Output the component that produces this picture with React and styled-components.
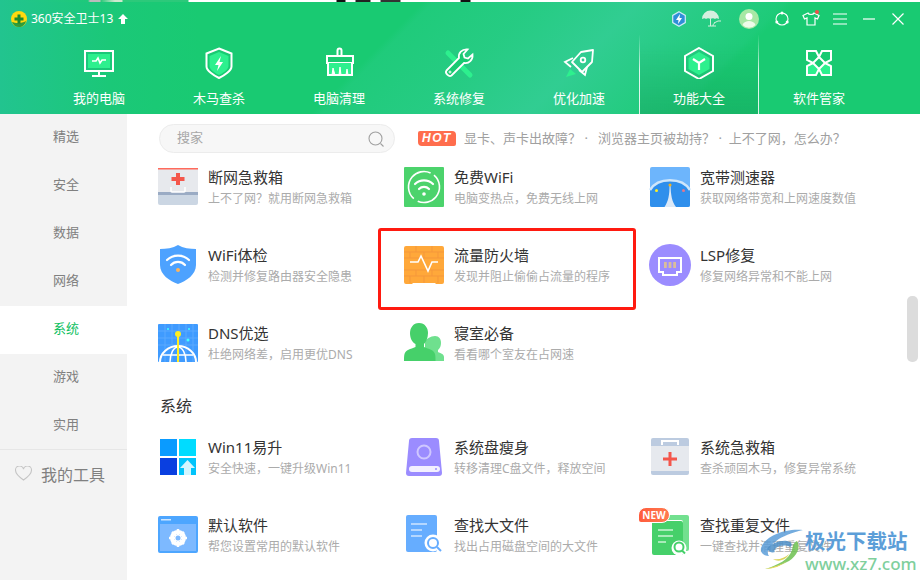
import React from 'react';
import styled, { createGlobalStyle } from 'styled-components';

const GlobalStyle = createGlobalStyle`
  html, body {
    margin: 0;
    padding: 0;
    background: #fff;
  }
  * {
    box-sizing: border-box;
  }
`;

const Page = styled.div`
  position: relative;
  width: 920px;
  height: 580px;
  overflow: hidden;
  background: #fff;
  font-family: 'Noto Sans', 'Noto Sans CJK SC', sans-serif;
`;

const TopStrip = styled.div`
  height: 2px;
  background: linear-gradient(
    90deg,
    #22c48f 0,
    #1ec97a 88px,
    #bbb 90px,
    #bbb 100px,
    #2cc97a 101px,
    #cfe8cf 115px,
    #cfe8cf 122px,
    #2cc97a 123px,
    #2cc97a 188px,
    #fff 189px,
    #fff 336px,
    #111 337px,
    #111 345px,
    #fff 346px,
    #fff 355px,
    #222 356px,
    #222 370px,
    #fff 371px,
    #fff 380px,
    #333 381px,
    #333 400px,
    #fff 401px,
    #fff 460px,
    #111 461px,
    #111 470px,
    #fff 471px
  );
`;

const Header = styled.header`
  height: 112px;
  display: flex;
  flex-direction: column;
  color: #fff;
  background:
    linear-gradient(
      135deg,
      rgba(90, 210, 200, 0) 41%,
      rgba(90, 210, 200, 0.1) 42%,
      rgba(90, 210, 200, 0.2) 52%,
      rgba(90, 210, 200, 0.37) 62%,
      rgba(90, 210, 200, 0.2) 70%,
      rgba(90, 210, 200, 0.08) 76%,
      rgba(90, 210, 200, 0) 77%
    ),
    linear-gradient(90deg, #22c48f 0, #1bc878 110px, #19ca72 200px);
`;

const TitleBar = styled.div`
  height: 33px;
  display: flex;
  align-items: center;
  justify-content: space-between;
  padding: 0 8px 0 11px;
`;

const Brand = styled.div`
  display: flex;
  align-items: center;
  font-size: 12px;
  line-height: 18px;
`;

const BrandName = styled.span`
  margin: 0 5px 0 4px;
`;

const WindowTools = styled.div`
  display: flex;
  align-items: center;
`;

const ToolSlot = styled.div`
  width: ${(p) => p.$w}px;
  height: 24px;
  display: flex;
  align-items: center;
  justify-content: center;
`;

const Nav = styled.nav`
  flex: 1;
  display: flex;
  padding-left: 39px;
`;

const Tab = styled.div`
  width: 120px;
  display: flex;
  flex-direction: column;
  align-items: center;
  padding-top: 12px;
  border-left: 1px solid transparent;
  border-right: 1px solid transparent;
  ${(p) =>
    p.$active &&
    `
    background: linear-gradient(180deg, rgba(20, 150, 85, 0) 10%, rgba(20, 150, 85, 0.38) 100%);
    border-image: linear-gradient(180deg, rgba(255,255,255,0), rgba(255,255,255,.85) 45%) 1;
  `}
`;

const TabLabel = styled.span`
  margin-top: 9px;
  font-size: 13px;
  line-height: 20px;
  white-space: nowrap;
`;

const Body = styled.div`
  height: 466px;
  display: flex;
`;

const Sidebar = styled.aside`
  width: 127px;
  flex: none;
  background: #f3f3f3;
  display: flex;
  flex-direction: column;
`;

const SideItem = styled.div`
  height: 48px;
  display: flex;
  align-items: center;
  justify-content: center;
  padding: 0 0 6px 5px;
  font-size: 13px;
  color: ${(p) => (p.$active ? '#0cc05e' : '#808080')};
  background: ${(p) => (p.$active ? '#fff' : 'transparent')};
`;

const MyTools = styled.div`
  height: 50px;
  margin-top: -1px;
  border-top: 1px solid #e6e6e6;
  display: flex;
  align-items: center;
  padding: 0 0 2px 15px;
  gap: 9px;
  font-size: 16px;
  color: #808080;
`;

const Main = styled.main`
  flex: 1;
  min-width: 0;
  padding: 10px 0 0 31px;
`;

const SearchRow = styled.div`
  height: 29px;
  margin-bottom: 14px;
  display: flex;
  align-items: center;
`;

const SearchBox = styled.div`
  width: 236px;
  height: 29px;
  margin-left: 1px;
  padding: 0 10px 0 17px;
  border: 1px solid #ececec;
  border-radius: 15px;
  background: #f7f7f7;
  display: flex;
  align-items: center;
  justify-content: space-between;
  font-size: 13px;
  line-height: 24px;
  color: #a8a8a8;
`;

const PlaceholderText = styled.span`
  margin-top: -3px;
`;

const HotBadge = styled.span`
  width: 38px;
  height: 15px;
  margin: 0 8px 0 23px;
  border-radius: 2px 4px 2px 4px;
  background: #ff6d4d;
  color: #fff;
  font: italic 700 12px/15px 'Liberation Sans', sans-serif;
  letter-spacing: 1.5px;
  text-align: center;
`;

const HotLinks = styled.span`
  margin-top: -2px;
  font-size: 13px;
  line-height: 18px;
  color: #a0a0a0;
  white-space: pre;
`;

const ItemGrid = styled.div`
  display: grid;
  grid-template-columns: repeat(3, 246px);
  grid-auto-rows: 58px;
  row-gap: 20px;
`;

const SectionTitle = styled.h2`
  margin: 14px 0 20px 2px;
  font-size: 16px;
  font-weight: 400;
  line-height: 22px;
  color: #333;
`;

const Item = styled.div`
  position: relative;
  display: flex;
  gap: 10px;
`;

const ItemIcon = styled.svg`
  flex: none;
  width: 40px;
  height: 40px;
  overflow: visible;
`;

const ItemText = styled.div`
  white-space: nowrap;
`;

const ItemTitle = styled.div`
  font-size: 15px;
  line-height: 21px;
  color: #333;
`;

const ItemDesc = styled.div`
  margin-top: 1px;
  font-size: 12px;
  line-height: 20px;
  color: #ababab;
`;

const Highlight = styled.div`
  position: absolute;
  left: -26px;
  top: -17px;
  width: 258px;
  height: 82px;
  border: 3px solid #ff1a10;
  border-radius: 3px;
  pointer-events: none;
`;

const NewBadge = styled.span`
  position: absolute;
  left: -12px;
  top: -8px;
  width: 32px;
  height: 16px;
  border: 1px solid #fff;
  border-radius: 8px 8px 8px 3px;
  background: linear-gradient(90deg, #ff5c3c, #ff7a50);
  color: #fff;
  font: 700 10px/14px 'Noto Sans', sans-serif;
  text-align: center;
`;

const ScrollThumb = styled.div`
  position: absolute;
  left: 907px;
  top: 296px;
  width: 11px;
  height: 66px;
  border-radius: 5px;
  background: #dcdcdc;
`;

const Watermark = styled.div`
  position: absolute;
  left: 759px;
  top: 528px;
  display: flex;
  pointer-events: none;
`;

const WatermarkText = styled.div`
  display: flex;
  flex-direction: column;
`;

const WatermarkName = styled.span`
  font-size: 20.5px;
  font-weight: 700;
  line-height: 27px;
  color: #5c9ed8;
  white-space: nowrap;
`;

const WatermarkUrl = styled.span`
  font-size: 17px;
  font-weight: 500;
  line-height: 18px;
  color: #7fcf9d;
`;

const Spark = '#2df08e';

const TabSvg = ({ children }) => (
  <svg width="32" height="32" viewBox="0 0 32 32" fill="none" stroke="#fff" strokeWidth="2">
    {children}
  </svg>
);

const MonitorIcon = () => (
  <TabSvg>
    <rect x="2" y="4" width="28" height="20" />
    <rect x="5" y="7" width="22" height="14" fill={Spark} stroke="none" />
    <path d="M9 14h4l2-3 2 5 2-3h4" strokeWidth="1.6" />
    <path d="M16 25v4M9 29h14" />
  </TabSvg>
);

const ShieldIcon = () => (
  <TabSvg>
    <path d="M16 1.5 28.5 6.5v13c0 4-7 9-12.5 11.5C10.500 28.500 3.500 23.500 3.500 19.500v-13Z" />
    <path d="M16 5 25.500 9v10c0 3-5 7-9.500 9-4.500-2-9.500-6-9.500-9V9Z" fill={Spark} stroke="none" />
    <path d="M18 9l-6 9h3.500l-1.500 6 6-9h-3.500Z" fill="#fff" stroke="none" />
  </TabSvg>
);

const BroomIcon = () => (
  <TabSvg>
    <path d="M14.500 9V3.500a2 2 0 0 1 4 0V9" />
    <rect x="4" y="9" width="26" height="7" />
    <path d="M5 16h24l1 13H4Z" fill={Spark} stroke="none" />
    <path d="M5 16v12h24V16" />
    <path d="M9 28l1-7 2 7M16 28l1-8 1 8M23 28l1-6 1 6" fill="#fff" stroke="#fff" strokeWidth="1" />
  </TabSvg>
);

const WrenchIcon = () => (
  <TabSvg>
    <path d="M5 6 27 28" stroke={Spark} strokeWidth="5" strokeLinecap="round" />
    <path
      d="M3.500 23.500 16 11C15 6 19 2 24.500 2.500L20.500 7l1 3.500 3.500 1 4.500-4C30 13 26 17 21 16L8.500 28.500C6 30.500 1.500 26 3.500 23.500Z"
      fill="#19ca72"
      strokeWidth="1.800"
    />
    <circle cx="7" cy="25" r="1" strokeWidth="1" />
  </TabSvg>
);

const RocketIcon = () => (
  <TabSvg>
    <path d="M3 30l4-8 6 5Z" fill={Spark} stroke="none" />
    <path d="M30 3 29 15 19 25 9 15 18 5Z" strokeLinejoin="round" strokeWidth="1.800" />
    <path d="M10 11 2 15l6 5M24 20l-2 8-6-5" strokeWidth="1.800" />
    <circle cx="20" cy="13" r="2.300" strokeWidth="1.800" />
  </TabSvg>
);

const HexIcon = () => (
  <TabSvg>
    <path d="M16 1 30 9v15l-14 8-14-8V9Z" />
    <path d="M16 5 26.500 11v11L16 28 5.500 22V11Z" fill={Spark} stroke="none" />
    <path d="M10 12l6 4 6-4M16 16v7" strokeWidth="2.200" />
  </TabSvg>
);

const PetalIcon = () => (
  <TabSvg>
    <path d="M4 28h9l3-6-6-6-6 3Z" fill={Spark} />
    <path d="M28 28h-9l-3-6 6-6 6 3Z" fill={Spark} />
    <path d="M4 4h9l3 6-6 6-6-3Z" />
    <path d="M28 4h-9l-3 6 6 6 6-3Z" />
  </TabSvg>
);

const tabs = [
  { label: '我的电脑', Icon: MonitorIcon },
  { label: '木马查杀', Icon: ShieldIcon },
  { label: '电脑清理', Icon: BroomIcon },
  { label: '系统修复', Icon: WrenchIcon },
  { label: '优化加速', Icon: RocketIcon },
  { label: '功能大全', Icon: HexIcon, active: true },
  { label: '软件管家', Icon: PetalIcon },
];

const sideItems = ['精选', '安全', '数据', '网络', '系统', '游戏', '实用'];

const icons = {
  firstAid: (
    <>
      <rect y="1" width="40" height="37" rx="2" fill="#cbd6e3" />
      <path d="M0 3a2 2 0 0 1 2-2h36a2 2 0 0 1 2 2v22H0Z" fill="#e7e9ed" />
      <rect y="1" width="40" height="1.500" fill="#ff6a5c" />
      <rect y="25" width="40" height="3" fill="#9aabc4" />
      <path d="M13 20v4a1 1 0 0 0 1 1h12a1 1 0 0 0 1-1v-4" fill="none" stroke="#fff" strokeWidth="1.500" />
      <path d="M18 6h4v4h4.500v4H22v4h-4v-4h-4.500v-4H18Z" fill="#f4574c" />
    </>
  ),
  wifiSquare: (
    <>
      <rect width="40" height="40" fill="#4cd36c" rx="1" />
      <circle cx="20" cy="20" r="15.500" fill="none" stroke="#fff" strokeWidth="1.600" strokeDasharray="44 4.700" transform="rotate(-50 20 20)" />
      <g fill="none" stroke="#fff" strokeWidth="2.200" strokeLinecap="round">
        <path d="M11 17a13 13 0 0 1 18 0" />
        <path d="M15 22a7 7 0 0 1 10 0" />
      </g>
      <circle cx="20" cy="27" r="1.800" fill="#fff" />
    </>
  ),
  speed: (
    <>
      <rect width="40" height="40" rx="2" fill="#6db5fc" />
      <path d="M0 23C8 10 32 10 40 23V38a2 2 0 0 1-2 2H2a2 2 0 0 1-2-2Z" fill="#2f8fec" />
      <path d="M0 23C8 10 32 10 40 23" fill="none" stroke="#cfe6fb" strokeWidth="2.500" />
      <path d="M19.500 18h1c.3 10 1.500 17 5.500 22H14.500c3.500-5 5.200-12 5-22Z" fill="#dce9f7" />
      <circle cx="20" cy="18" r="1.500" fill="#f5b21c" />
      <circle cx="6.500" cy="23.500" r="1.500" fill="#ffee22" />
      <circle cx="33.500" cy="23.500" r="1.500" fill="#e6758b" />
    </>
  ),
  shield: (
    <>
      <path d="M20 0 C25 3 32 4 38 4V20C38 30 28 36 20 39 12 36 2 30 2 20V4C8 4 15 3 20 0Z" fill="#4da2ff" />
      <g fill="none" stroke="#fff" strokeWidth="2.200" strokeLinecap="round">
        <path d="M9 15a16 16 0 0 1 22 0" />
        <path d="M13 20a9.500 9.500 0 0 1 14 0" />
      </g>
      <circle cx="20" cy="25" r="2" fill="#ffb45a" />
    </>
  ),
  firewall: (
    <>
      <path d="M0 3a2 2 0 0 1 2-2h36a2 2 0 0 1 2 2v34a2 2 0 0 1-2 2h-6l-1-1H9l-1 1H2a2 2 0 0 1-2-2Z" fill="#ffa83a" />
      <path d="M0 7h40M0 13h40M0 25h40M0 31h40M12 1v6M28 1v6M6 7v6M20 7v6M34 7v6M12 25v6M28 25v6M6 31v7M20 31v7M34 31v7" stroke="#f5973a" strokeWidth="1" />
      <path d="M6 17h8l3-6 7 15 4-9h6" fill="none" stroke="#fff" strokeWidth="1.600" />
    </>
  ),
  port: (
    <>
      <circle cx="20" cy="20" r="21" fill="#9b8cff" />
      <path d="M9 13h22v14h-4v3H13v-3H9Z" fill="none" stroke="#fff" strokeWidth="2" />
      <rect x="14" y="17" width="2.800" height="6" fill="#d9bd9b" />
      <rect x="18.600" y="17" width="2.800" height="6" fill="#d9bd9b" />
      <rect x="23.200" y="17" width="2.800" height="6" fill="#d9bd9b" />
    </>
  ),
  dns: (
    <>
      <rect y="1" width="40" height="38" fill="#3f9bff" rx="1" />
      <path d="M7 1v38M14 1v38M21 1v38M28 1v38M35 1v38M0 8h40M0 15h40M0 22h40" stroke="#5aa9ff" strokeWidth="1" />
      <circle cx="10" cy="6" r="1" fill="#4ff" />
      <circle cx="31" cy="6" r="1" fill="#4ff" />
      <circle cx="30" cy="17" r="1.500" fill="#4ff" />
      <path d="M2 39a18 16 0 0 1 36 0" fill="none" stroke="#fff" strokeWidth="2" />
      <path d="M12 39a8 15 0 0 1 16 0M5 32h30" fill="none" stroke="#fff" strokeWidth="1.500" />
      <path d="M20 10v29" stroke="#ffee22" strokeWidth="2" />
      <circle cx="20" cy="11" r="3" fill="#ffee22" />
    </>
  ),
  people: (
    <>
      <path d="M31 13c4 0 6 3 6 7 0 3-1 5-3 7v2c2 1 6 2 6 5v4H21V20c0-4 6-7 10-7Z" fill="#6fe08e" />
      <path d="M15 0c6 0 9 5 9 10 0 5-2 9-4 11v3c5 2 10 3 11 7 .5 2 .5 4 .5 7H0c0-3 0-5 .5-7 1-4 6-5 11-7v-3C8 19 6 15 6 10 6 5 9 0 15 0Z" fill="#46d06a" />
    </>
  ),
  win: (
    <>
      <rect x="2" y="2" width="17" height="17" fill="#0a9bff" />
      <rect x="21" y="2" width="17" height="17" fill="#00dcff" />
      <rect x="2" y="21" width="17" height="17" fill="#0a3fe0" />
      <rect x="21" y="21" width="17" height="17" fill="#00c4fb" />
      <path d="M29.500 23 37 31h-4v7h-7v-7h-4Z" fill="#d2f6ff" />
    </>
  ),
  disk: (
    <>
      <path d="M2 36 5 4a3 3 0 0 1 3-3h24a3 3 0 0 1 3 3l3 32a3 3 0 0 1-3 3H5a3 3 0 0 1-3-3Z" fill="#9b8cff" />
      <circle cx="20" cy="15" r="6.500" fill="none" stroke="#cfc7ff" strokeWidth="2" />
      <rect x="5" y="29" width="31" height="6" rx="3" fill="#f3f0ff" />
      <circle cx="32" cy="32" r="1" fill="#9b8cff" />
    </>
  ),
  kit: (
    <>
      <rect x="1" y="1" width="38" height="37" rx="2" fill="#bccbe0" />
      <rect x="1" y="9" width="38" height="25" fill="#e6e9ee" />
      <path d="M12 8V4h16v4" fill="none" stroke="#fff" strokeWidth="2" />
      <path d="M18.500 15h3v5.500H27v3h-5.500V29h-3v-5.500H13v-3h5.500Z" fill="#f4574c" />
    </>
  ),
  gear: (
    <>
      <rect y="1" width="40" height="37" rx="2" fill="#4da6ff" />
      <rect x="2" y="9" width="36" height="27" fill="#7db9ff" />
      <rect x="3" y="4" width="10" height="1.500" fill="#cfe6ff" />
      <circle cx="20" cy="23" r="6" fill="none" stroke="#fff" strokeWidth="4" />
      <path d="M20 14v18M11 23h18M14 17l12 12M26 17 14 29" stroke="#fff" strokeWidth="2.500" />
      <circle cx="20" cy="23" r="2.500" fill="#7db9ff" />
    </>
  ),
  bigFile: (
    <>
      <rect x="2" width="31" height="37" rx="2" fill="#66adff" />
      <path d="M7 9h16M7 15h11M7 21h11" stroke="#cfe5ff" strokeWidth="1.600" />
      <circle cx="29" cy="28" r="8.500" fill="#fff" />
      <circle cx="29" cy="28" r="5" fill="none" stroke="#66adff" strokeWidth="2" />
      <path d="M33 32l4 4" stroke="#66adff" strokeWidth="2" />
    </>
  ),
  dupFile: (
    <>
      <rect x="8" y="0" width="31" height="36" rx="2" fill="#72e08f" />
      <rect x="3" y="5" width="30" height="35" rx="2" fill="#fff" />
      <rect x="2" y="6" width="31" height="34" rx="2" fill="#46d06a" />
      <path d="M8 15h15M8 21h15M8 27h8" stroke="#c9f3d4" strokeWidth="1.600" />
      <circle cx="29" cy="33" r="7.500" fill="#fff" />
      <circle cx="29" cy="32" r="4.500" fill="none" stroke="#46d06a" strokeWidth="2" />
      <path d="M32 35.500l3 3" stroke="#46d06a" strokeWidth="2" />
    </>
  ),
};

const firstGroup = [
  { icon: 'firstAid', title: '断网急救箱', desc: '上不了网？就用断网急救箱' },
  { icon: 'wifiSquare', title: '免费WiFi', desc: '电脑变热点，免费无线上网' },
  { icon: 'speed', title: '宽带测速器', desc: '获取网络带宽和上网速度数值' },
  { icon: 'shield', title: 'WiFi体检', desc: '检测并修复路由器安全隐患' },
  { icon: 'firewall', title: '流量防火墙', desc: '发现并阻止偷偷占流量的程序', marked: true },
  { icon: 'port', title: 'LSP修复', desc: '修复网络异常和不能上网' },
  { icon: 'dns', title: 'DNS优选', desc: '杜绝网络差，启用更优DNS' },
  { icon: 'people', title: '寝室必备', desc: '看看哪个室友在占网速' },
];

const secondGroup = [
  { icon: 'win', title: 'Win11易升', desc: '安全快速，一键升级Win11' },
  { icon: 'disk', title: '系统盘瘦身', desc: '转移清理C盘文件，释放空间' },
  { icon: 'kit', title: '系统急救箱', desc: '查杀顽固木马，修复异常系统' },
  { icon: 'gear', title: '默认软件', desc: '帮您设置常用的默认软件' },
  { icon: 'bigFile', title: '查找大文件', desc: '找出占用磁盘空间的大文件' },
  { icon: 'dupFile', title: '查找重复文件', desc: '一键查找并清理重复文件', isNew: true },
];

const ToolItem = ({ item }) => (
  <Item>
    <ItemIcon viewBox="0 0 40 40">{icons[item.icon]}</ItemIcon>
    <ItemText>
      <ItemTitle>{item.title}</ItemTitle>
      <ItemDesc>{item.desc}</ItemDesc>
    </ItemText>
    {item.isNew && <NewBadge>NEW</NewBadge>}
    {item.marked && <Highlight />}
  </Item>
);

const App = () => {
  return (
    <Page>
      <GlobalStyle />
      <TopStrip />
      <Header>
        <TitleBar>
          <Brand>
            <svg width="16" height="16" viewBox="0 0 16 16">
              <circle cx="8" cy="8" r="8" fill="#ffd90f" />
              <path d="M1 11c3 1 9 2 14-1-1 4-4 6-7 6-3 0-6-2-7-5Z" fill="#2f9d3a" />
              <path d="M6.500 3.500h3v3h3v3h-3v3h-3v-3h-3v-3h3Z" fill="#1c8a2d" />
            </svg>
            <BrandName>360安全卫士13</BrandName>
            <svg width="10" height="10" viewBox="0 0 10 10">
              <path d="M5 0 10 5H7v5H3V5H0Z" fill="#fff" />
            </svg>
          </Brand>
          <WindowTools>
            <ToolSlot $w={30}>
              <svg width="16" height="16" viewBox="0 0 16 16">
                <path d="M8 .8 14.300 4.400v7.200L8 15.200 1.700 11.600V4.400Z" fill="#2f8fd8" stroke="#cfeaf8" strokeWidth="1.200" />
                <path d="M9 3 5 9h2.500L7 13l4-6H8.500Z" fill="#fff" />
              </svg>
            </ToolSlot>
            <ToolSlot $w={36}>
              <svg width="20" height="18" viewBox="0 0 20 18" fill="none">
                <path d="M0 9a8.500 8.500 0 0 1 17 0c-2-1-3-1-4 0-1-1-3-1-4.500 0-1.500-1-3.500-1-4.500 0-1-1-2-1-4 0Z" fill="#d5efdf" />
                <path d="M8.500 9v7M6 16h8M12 13l4-2 3 0M11 16c0-2 1-3 2-3" stroke="#d5efdf" strokeWidth="1" />
              </svg>
            </ToolSlot>
            <ToolSlot $w={38}>
              <svg width="20" height="20" viewBox="0 0 20 20">
                <circle cx="10" cy="10" r="10" fill="#a7e8a5" />
                <circle cx="10" cy="7.500" r="3.500" fill="#fff" />
                <path d="M3.500 16c1-3 4-4 6.500-4s5.500 1 6.500 4a9 9 0 0 1-13 0Z" fill="#eefbe9" />
              </svg>
            </ToolSlot>
            <ToolSlot $w={28}>
              <svg width="16" height="16" viewBox="0 0 16 16" fill="none" stroke="#fff" strokeWidth="1.100">
                <circle cx="8" cy="8" r="6" />
                <circle cx="8" cy="2" r="1.500" fill="#fff" stroke="none" />
                <circle cx="2.800" cy="11" r="1.500" fill="#fff" stroke="none" />
                <circle cx="13.200" cy="11" r="1.500" fill="#fff" stroke="none" />
              </svg>
            </ToolSlot>
            <ToolSlot $w={30}>
              <svg width="18" height="17" viewBox="0 0 18 17" fill="none" stroke="#fff" strokeWidth="1.200">
                <path d="M6 3 1 5.500 2.500 9 5 8v7h8V8l2.500 1L17 5.500 12 3c-.5 2-5.500 2-6 0Z" />
                <circle cx="15" cy="2" r="2" fill="#f0504a" stroke="none" />
              </svg>
            </ToolSlot>
            <ToolSlot $w={28}>
              <svg width="14" height="12" viewBox="0 0 14 12" stroke="#fff" strokeWidth="1.100">
                <path d="M0 1h14M0 6h14M0 11h14" />
              </svg>
            </ToolSlot>
            <ToolSlot $w={30}>
              <svg width="12" height="2" viewBox="0 0 12 2" stroke="#fff" strokeWidth="1.200">
                <path d="M0 1h12" />
              </svg>
            </ToolSlot>
            <ToolSlot $w={28}>
              <svg width="12" height="12" viewBox="0 0 12 12" stroke="#fff" strokeWidth="1.200">
                <path d="M.5.500l11 11M11.500.500l-11 11" />
              </svg>
            </ToolSlot>
          </WindowTools>
        </TitleBar>
        <Nav>
          {tabs.map(({ label, Icon, active }) => (
            <Tab key={label} $active={active}>
              <Icon />
              <TabLabel>{label}</TabLabel>
            </Tab>
          ))}
        </Nav>
      </Header>
      <Body>
        <Sidebar>
          {sideItems.map((name) => (
            <SideItem key={name} $active={name === '系统'}>
              {name}
            </SideItem>
          ))}
          <MyTools>
            <svg width="17" height="15" viewBox="0 0 17 15" fill="none" stroke="#c4c4c4" strokeWidth="1.100">
              <path d="M8.500 14C3 10 .6 7.500.6 4.700A4 4 0 0 1 8.500 3.200 4 4 0 0 1 16.400 4.700C16.400 7.500 14 10 8.500 14Z" />
            </svg>
            我的工具
          </MyTools>
        </Sidebar>
        <Main>
          <SearchRow>
            <SearchBox>
              <PlaceholderText>搜家</PlaceholderText>
              <svg width="16" height="16" viewBox="0 0 16 16" fill="none" stroke="#a0a0a0" strokeWidth="1.100">
                <circle cx="7.500" cy="7.500" r="6.500" />
                <path d="M12.500 12.500l3 3" />
              </svg>
            </SearchBox>
            <HotBadge>HOT</HotBadge>
            <HotLinks>显卡、声卡出故障？ ·   浏览器主页被劫持？ ·  上不了网，怎么办？</HotLinks>
          </SearchRow>
          <ItemGrid>
            {firstGroup.map((item) => (
              <ToolItem key={item.title} item={item} />
            ))}
          </ItemGrid>
          <SectionTitle>系统</SectionTitle>
          <ItemGrid>
            {secondGroup.map((item) => (
              <ToolItem key={item.title} item={item} />
            ))}
          </ItemGrid>
        </Main>
      </Body>
      <ScrollThumb />
      <Watermark>
        <svg width="46" height="42" viewBox="0 0 46 42" fill="none">
          <path d="M44 2C26 0 6 8 2 20c-1 5 3 8 8 8C5 22 16 8 44 2Z" fill="#5c9ed8" opacity="0.85" />
          <path d="M8 21c4-6 14-9 20-8 5 1 6 4 3 6-3-2-10-2-14 1-2 2-2 3-1 4-3 1-6 0-8-3Z" fill="#4d8fc8" opacity="0.85" />
          <path d="M38 13c4 6 0 15-8 20-7 4-16 7-24 8 14-4 24-10 27-19 1-4 1-7 5-9Z" fill="#6cbf4f" opacity="0.85" />
          <path d="M6 41c8-2 16-4 22-8-6 5-14 8-22 8Z" fill="#e8d85a" />
          <path d="M14 31c6 1 12-1 16-5-2 5-10 9-16 5Z" fill="#d8d04a" opacity="0.9" />
        </svg>
        <WatermarkText>
          <WatermarkName>极光下载站</WatermarkName>
          <WatermarkUrl>www.xz7.com</WatermarkUrl>
        </WatermarkText>
      </Watermark>
    </Page>
  );
};

export default App;
